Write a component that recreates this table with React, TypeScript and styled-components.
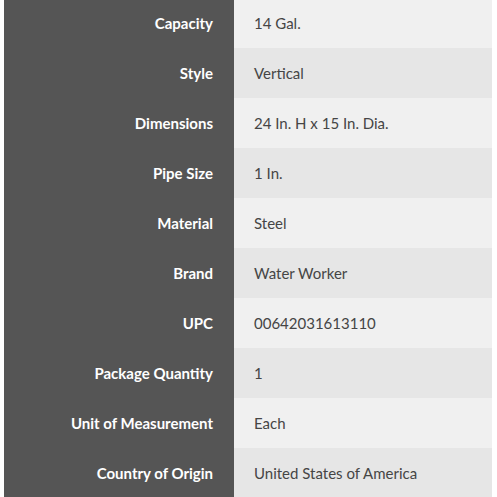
import React from "react";
import styled, { createGlobalStyle } from "styled-components";

const Global = createGlobalStyle`
  html, body { margin: 0; padding: 0; background: #ffffff; }
  body { font-family: Lato, "Open Sans", sans-serif; }
`;

const Wrap = styled.div`
  padding: 0 5px 0 4px;
  overflow: hidden;
  height: 497px;
`;

const Table = styled.div`
  display: grid;
  grid-template-columns: 230px 1fr;
  margin-top: -2px;
`;

const Label = styled.div`
  background: #555555;
  color: #ffffff;
  font-weight: 700;
  font-size: 15px;
  height: 50px;
  display: flex;
  align-items: center;
  justify-content: flex-end;
  padding-right: 21px;
  box-sizing: border-box;
`;

const Value = styled.div<{ $alt: boolean }>`
  background: ${(p) => (p.$alt ? "#e6e6e6" : "#f0f0f0")};
  color: #454545;
  font-size: 15px;
  height: 50px;
  display: flex;
  align-items: center;
  padding-left: 20px;
  box-sizing: border-box;
`;

const rows: [string, string][] = [
  ["Capacity", "14 Gal."],
  ["Style", "Vertical"],
  ["Dimensions", "24 In. H x 15 In. Dia."],
  ["Pipe Size", "1 In."],
  ["Material", "Steel"],
  ["Brand", "Water Worker"],
  ["UPC", "00642031613110"],
  ["Package Quantity", "1"],
  ["Unit of Measurement", "Each"],
  ["Country of Origin", "United States of America"],
];

export default function App() {
  return (
    <>
      <Global />
      <Wrap>
        <Table>
          {rows.map(([k, v], i) => (
            <React.Fragment key={k}>
              <Label>{k}</Label>
              <Value $alt={i % 2 === 1}>{v}</Value>
            </React.Fragment>
          ))}
        </Table>
      </Wrap>
    </>
  );
}
